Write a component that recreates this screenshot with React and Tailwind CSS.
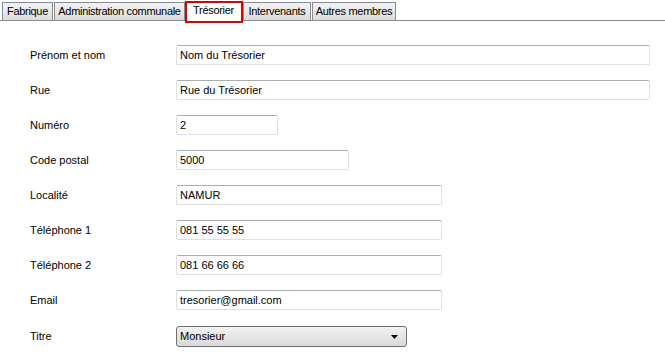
import React from "react";

const tabs = [
  { t: "Fabrique", w: "w-[51px]" },
  { t: "Administration communale", w: "w-[131px]" },
  { t: "Trésorier", w: "w-[57px]", sel: true },
  { t: "Intervenants", w: "w-[68px]" },
  { t: "Autres membres", w: "w-[84px]" },
];

const rows = [
  { label: "Prénom et nom", value: "Nom du Trésorier", w: "w-[474px]" },
  { label: "Rue", value: "Rue du Trésorier", w: "w-[474px]" },
  { label: "Numéro", value: "2", w: "w-[102px]" },
  { label: "Code postal", value: "5000", w: "w-[173px]" },
  { label: "Localité", value: "NAMUR", w: "w-[266px]" },
  { label: "Téléphone 1", value: "081 55 55 55", w: "w-[266px]" },
  { label: "Téléphone 2", value: "081 66 66 66", w: "w-[266px]" },
  { label: "Email", value: "tresorier@gmail.com", w: "w-[266px]" },
];

export default function App() {
  return (
    <div className="w-[665px] h-[362px] bg-white overflow-hidden text-[11px] text-black" style={{ fontFamily: '"Liberation Sans", Arial, sans-serif' }}>
      <div className="flex items-end h-[21px] border-b border-[#898c95] pl-[2px]">
        {tabs.map(({ t, w, sel }) =>
          sel ? (
            <div key={t} className={`${w} relative h-[20px] -mb-px bg-white border border-b-0 border-[#898c95] flex items-center justify-center ml-[-1px] mr-[1px] z-10 shrink-0`}>
              <span className="relative top-[-1px] tracking-[-0.3px] whitespace-nowrap">{t}</span>
              <div className="absolute left-[-1px] right-[-2px] top-[-1px] bottom-[-2px] border-2 border-[#e00000]" />
            </div>
          ) : (
            <div key={t} className={`${w} h-[18px] bg-gradient-to-b from-[#f3f3f3] to-[#dcdcdc] border border-b-0 border-[#898c95] flex items-center justify-center mr-[1px] shrink-0`}>
              <span className="tracking-[-0.3px] whitespace-nowrap">{t}</span>
            </div>
          )
        )}
      </div>
      <div className="pt-[24px] pl-[30px] flex flex-col gap-[15px]">
        {rows.map((r) => (
          <div key={r.label} className="flex items-center h-[20px]">
            <div className="w-[146px]">{r.label}</div>
            <div className={`${r.w} h-[20px] border border-[#dbdfe6] border-t-[#abadb3] rounded-[2px] bg-white flex items-center px-[3px]`}>
              {r.value}
            </div>
          </div>
        ))}
        <div className="flex items-center h-[21px] mt-[1px]">
          <div className="w-[146px]">Titre</div>
          <div className="w-[231px] h-[21px] border border-[#707070] rounded-[3px] bg-gradient-to-b from-[#f2f2f2] to-[#d9d9d9] flex items-center justify-between pl-[3px] pr-[8px]">
            <span>Monsieur</span>
            <svg width="7" height="4" viewBox="0 0 7 4"><path d="M0 0h7L3.5 4z" fill="#000" /></svg>
          </div>
        </div>
      </div>
    </div>
  );
}
